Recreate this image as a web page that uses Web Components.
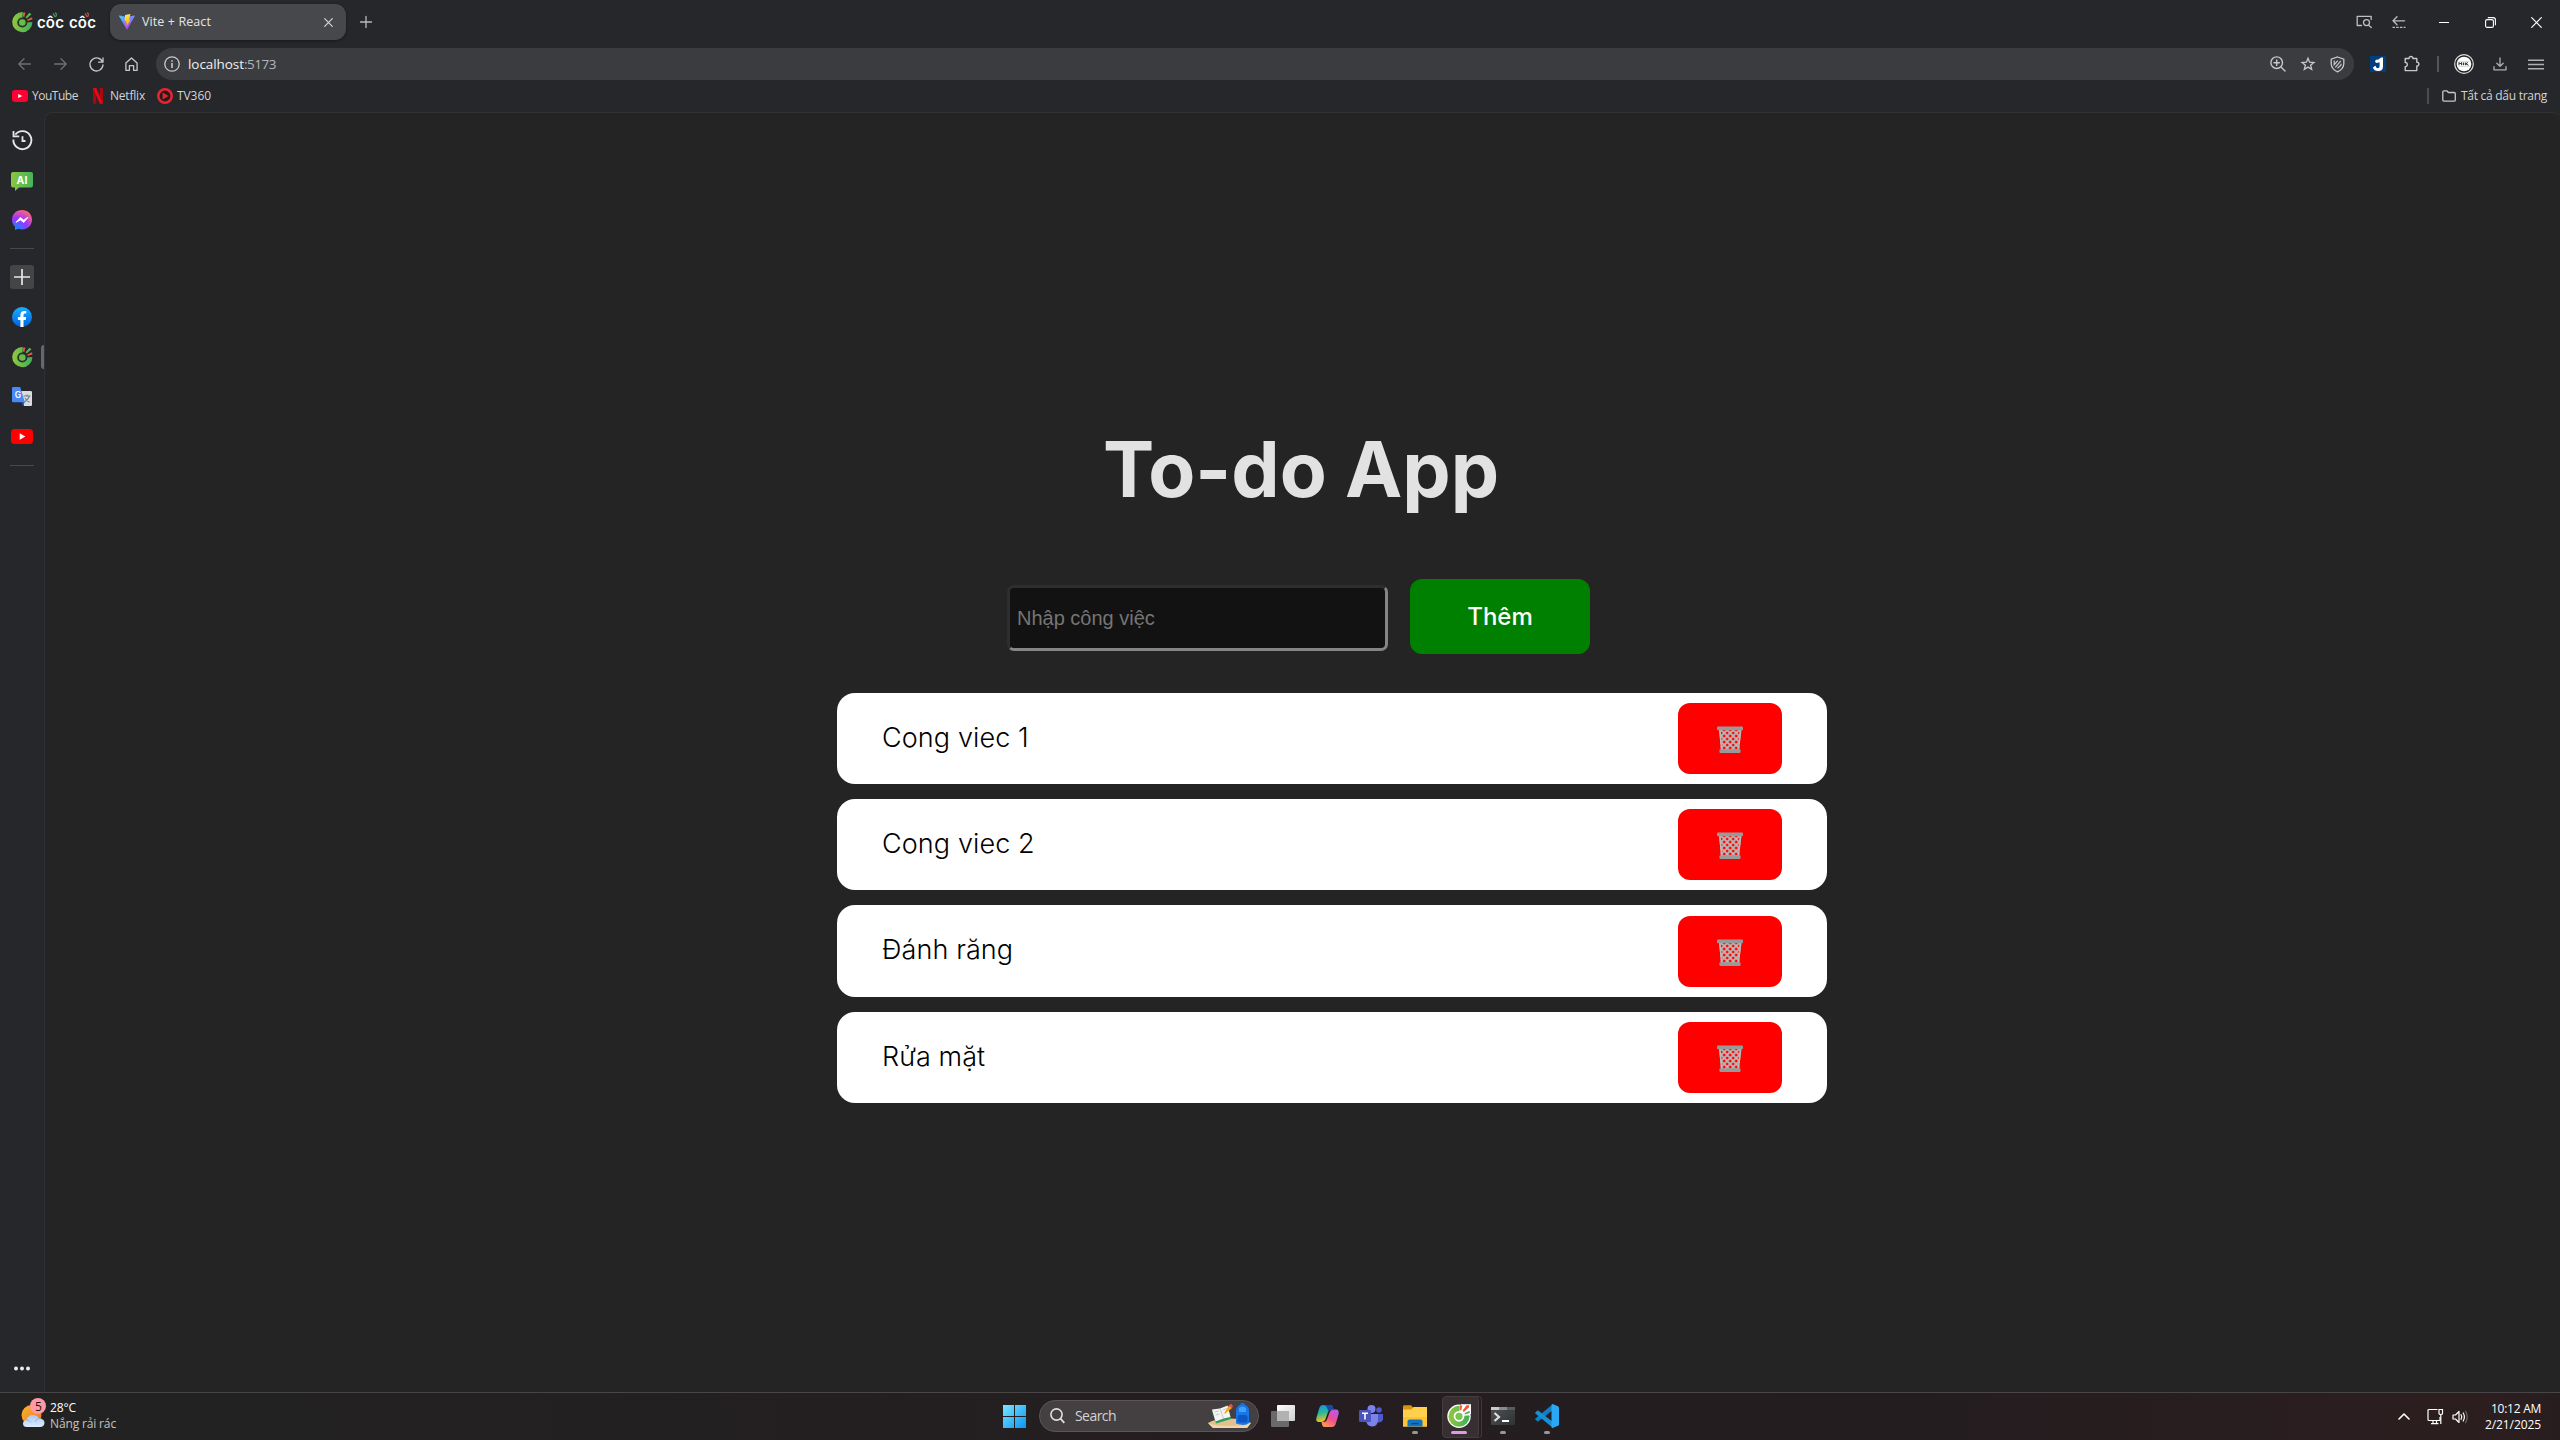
<!DOCTYPE html>
<html lang="vi">
<head>
<meta charset="utf-8">
<title>Vite + React</title>
<style>
html,body{margin:0;height:100%;background:#242424;overflow:hidden}
browser-desktop{height:1440px}
</style>
</head>
<body>
<browser-desktop></browser-desktop>
<script>
const UI = '"Open Sans","Noto Sans",sans-serif';
const coccoc = `<defs><linearGradient id="g" x1="0" x2="1"><stop offset="0" stop-color="#93c83d"/><stop offset="1" stop-color="#3fae5c"/></linearGradient></defs>
<path d="M10.800 0A10.100 10.100 0 1 0 20.400 9.900L14.500 10.500 10.500 6Z" fill="url(#g)"/><circle cx="10.300" cy="10.500" r="4.200" fill="#6cbb4d" stroke="#24352a" stroke-width="1.800"/>
<path d="M10.900 4.600 11.200 .4 13.400 .6 12.300 4.900Z" fill="#ef5a3c"/><path d="M13.500 5.300 17.300 .7 19.500 2.300 14.800 6.500Z" fill="#58b558"/><path d="M15.300 7.600 20 5.300 20.500 7.300 15.700 8.900Z" fill="#ef5a3c"/>`;
const play = (c)=>`<rect width="22" height="15" rx="3.5" fill="${c}"/><path d="M8.7 4.3 14.4 7.5 8.7 10.7Z" fill="#fff"/>`;
const line = (d,c='#c7c8ca',w=1.3)=>`<path d="${d}" fill="none" stroke="${c}" stroke-width="${w}" stroke-linecap="round" stroke-linejoin="round"/>`;
/* name: [width, height, markup] */
const ICONS = {
coccoc:[21,21,coccoc],
coccocRing:[24,24,`<defs><linearGradient id="g" x1="0" x2="1"><stop offset="0" stop-color="#93c83d"/><stop offset="1" stop-color="#3fae5c"/></linearGradient></defs><circle cx="12" cy="12.300" r="11.700" fill="#fff"/><path d="M14 .2H24V10H14Z" fill="#fff"/><circle cx="12" cy="12.300" r="10.500" fill="url(#g)"/><path d="M12.500 7 12.800 1.200H23V11.200L17 11.800Z" fill="#fff"/><circle cx="12" cy="12.300" r="4.500" fill="#7cc450" stroke="#fff" stroke-width="1.800"/><path d="M12.800 6 13.100 1.300 15.200 1.600 14.300 6.300Z" fill="#ef5a3c"/><path d="M15.500 6.800 19.500 1.300 22.300 1.200 21.800 3.600 17 8Z" fill="#ef5a3c"/><path d="M17.600 9.200 22.400 6.700 22.800 9 17.900 10.600Z" fill="#4db15b"/>`],
vite:[16,16,`<defs><linearGradient id="a" x1="0" y1="0" x2=".6" y2="1"><stop stop-color="#41d1ff"/><stop offset="1" stop-color="#bd34fe"/></linearGradient><linearGradient id="b" x1=".4" y1="0" x2=".6" y2="1"><stop stop-color="#ffea83"/><stop offset=".2" stop-color="#ffdd35"/><stop offset="1" stop-color="#ffa800"/></linearGradient></defs><path d="M15.7 2.2 8.4 15.3a.5.5 0 0 1-.8 0L.1 2.2a.4.4 0 0 1 .5-.6l7.3 1.3 7.3-1.3a.4.4 0 0 1 .5.6Z" fill="url(#a)"/><path d="M11.5 0 6.1 1.1 5.7 7.2 7.4 6.8 6.9 9.2 8.1 8.9 7.3 12.7 11.6 5.4 9.9 5.7 11.5 0Z" fill="url(#b)"/>`],
close:[9,9,line('M.7.7 8.3 8.3M8.3.7.7 8.3','#d4d5d7',1.2)],
plus:[12,12,line('M6 .5V11.5M.5 6H11.5','#b9babc',1.3)],
back:[13,12,line('M12.4 6H.8M6 .8.8 6 6 11.2','#6f7073')],
forward:[13,12,line('M.6 6H12.2M7 .8 12.2 6 7 11.2','#6f7073')],
reload:[15,15,line('M13.6 5.2A6.5 6.5 0 1 0 14 7.8M14 .8V5.2H9.6')],
home:[13,14,line('M.9 6 6.5.9 12.1 6V13.3H8.6V8.6H4.4V13.3H.9Z')],
info:[16,16,`<circle cx="8" cy="8" r="7.2" fill="none" stroke="#c7c8ca" stroke-width="1.3"/><path d="M7.2 7h1.6v5H7.2zM7.2 4.2h1.6v1.6H7.2z" fill="#c7c8ca"/>`],
ytb:[16,12,`<rect width="16" height="12" rx="3" fill="#ff0033"/><path d="M6.2 3.9 10.3 6 6.2 8.1Z" fill="#fff"/>`],
netflix:[10,16,`<path d="M0 0H3.3V16L0 15.5ZM6.7 0H10V15.5L6.7 16Z" fill="#a50912"/><path d="M0 0H3.3L10 16 6.7 15.6Z" fill="#e50914"/>`],
tv360:[16,16,`<circle cx="8" cy="8" r="6.7" fill="#27181c" stroke="#e3262f" stroke-width="2.6"/><path d="M5.6 4.6 11.6 8 5.6 11.4Z" fill="#e3262f"/>`],
tabsearch:[16,14,line('M5.5 10.5H1.2V1.3H15.2V4.5M12.9 10.4 15.3 12.6','#bdbec0')+`<circle cx="10.5" cy="7.6" r="3" fill="none" stroke="#bdbec0" stroke-width="1.3"/>`],
dash:[14,12,line('M12.6 4.8H1M5 .8 1 4.8 5 8.8','#bdbec0')+`<path d="M.5 11.3H13.5" stroke="#bdbec0" stroke-width="1.3" stroke-dasharray="2.5 1.2"/>`],
min:[10,10,`<path d="M0 5.5H10" stroke="#fff"/>`],
restore:[11,11,`<rect x=".6" y="2.6" width="7.8" height="7.8" rx="1.5" fill="none" stroke="#fff" stroke-width="1.1"/><path d="M2.8.6H8.2Q10.4.6 10.4 2.8V8.2" fill="none" stroke="#fff" stroke-width="1.1"/>`],
winclose:[11,11,line('M.7.7 10.3 10.3M10.3.7.7 10.3','#fff',1.2)],
zoom:[16,16,`<circle cx="6.7" cy="6.7" r="5.8" fill="none" stroke="#c7c8ca" stroke-width="1.4"/>`+line('M11 11 15 15M6.7 4V9.4M4 6.7H9.4','#c7c8ca',1.4)],
star:[14,14,`<path d="M7 1.2 8.6 5.2 12.9 5.5 9.6 8.2 10.7 12.4 7 10.1 3.3 12.4 4.4 8.2 1.1 5.5 5.4 5.2Z" fill="none" stroke="#c7c8ca" stroke-width="1.3"/>`],
shield:[15,17,`<path d="M7.5 1 13.8 3.1V8Q13.4 13 7.5 15.9 1.6 13 1.2 8V3.1Z" fill="none" stroke="#c7c8ca" stroke-width="1.3"/><path d="M4.2 4.5V8.7L7.8 4.6M10.8 4.8 5.3 11.4M11 7.8V9L7.5 12.2" fill="none" stroke="#c7c8ca" stroke-width="1.2"/>`],
jext:[16,16,`<rect width="16" height="16" fill="#003f7f"/><path d="M8.2 3.6 11.2 1.6H13V10.5Q13 15 8 15 3.6 15 3 11.2L5.6 9.7Q6.2 12.4 8.1 12.2 9.6 12 9.6 10V6.2L8 6.5Z" fill="#fff"/><circle cx="7" cy="5.3" r="1.8" fill="#fff"/>`],
puzzle:[16,16,line('M1.2 2.5H5.1C4.5-.1 9.4-.1 8.8 2.5H12.8V6.3C15.6 5.8 15.6 10.4 12.8 9.9V14.6H1.2V10.6C4 10.9 4 6.1 1.2 6.5Z','#c7c8ca',1.4)],
avatar:[20,20,`<circle cx="10" cy="10" r="9.3" fill="#242424" stroke="#ddd" stroke-width="1.2"/><circle cx="10" cy="10" r="7.300" fill="#fff"/><path d="M5 11.200V8.500L6.300 10 7.600 8.500V11.200M9.400 8.500V11.200M11.300 8.500V11.200M13.800 8.500 11.800 9.800 14.400 11.200" stroke="#222" stroke-width="1" fill="none"/><path d="M4.500 7.300H15.500M4.500 12.400H15.500" stroke="#bbb" stroke-width=".6"/>`],
download:[14,14,line('M7 .8V9.2M3.8 6.2 7 9.3 10.2 6.2M1 9.6V12.8H13V9.6','#aeafb1')],
menu:[16,11,`<path d="M0 1.2H16M0 5.5H16M0 9.8H16" stroke="#aeafb1" stroke-width="1.4"/>`],
folder:[14,12,line('M.8 2Q.8.8 2 .8H4.8L6.4 2.5H12Q13.3 2.5 13.3 3.8V10Q13.3 11.2 12 11.2H2Q.8 11.2.8 10Z')],
history:[21,21,`<path d="M3.3 4.6A9 9 0 1 1 1.4 9.5" fill="none" stroke="#e6e7e9" stroke-width="1.9"/><path d="M1.5 1V6.4H7.2M10.5 6.3V11H13.5" fill="none" stroke="#e6e7e9" stroke-width="1.8"/>`],
ai:[22,19,`<defs><linearGradient id="i"><stop stop-color="#8cc63f"/><stop offset="1" stop-color="#45b35e"/></linearGradient></defs><path d="M2 0H20Q22 0 22 2V13.5Q22 15.5 20 15.5H8L4 19V15.5H2Q0 15.5 0 13.5V2Q0 0 2 0Z" fill="url(#i)"/><text x="11" y="11.7" text-anchor="middle" font-family="Inter" font-weight="700" font-size="10.5" fill="#fff">AI</text>`],
messenger:[20,20,`<defs><radialGradient id="m" cx=".2" cy="1" r="1.1"><stop stop-color="#0090ff"/><stop offset=".55" stop-color="#a033ff"/><stop offset="1" stop-color="#ff6a70"/></radialGradient></defs><path d="M10 0C4.300 0 0 4.200 0 9.700 0 12.500 1.200 15 3 16.700V20L6.300 18.700Q8 19.400 10 19.400C15.700 19.400 20 15.200 20 9.700S15.700 0 10 0Z" fill="url(#m)"/><path d="M4 12.400 8.300 7.400 11.600 10 16 7.300 11.800 12.500 8.400 9.900Z" fill="#fff" stroke="#fff" stroke-width=".8" stroke-linejoin="round"/>`],
add:[24,24,`<rect width="24" height="24" rx="3" fill="#444547"/><path d="M12 4V20M4 12H20" stroke="#e8e8e8" stroke-width="1.7"/>`],
facebook:[20,20,`<defs><linearGradient id="f" x2="0" y2="1"><stop stop-color="#19afff"/><stop offset="1" stop-color="#0062e0"/></linearGradient></defs><circle cx="10" cy="10" r="10" fill="url(#f)"/><path d="M8.400 20V12.900H5.900V10H8.400V7.800C8.400 5.300 9.900 3.900 12.200 3.900L14.200 4.100V6.500H13C11.800 6.500 11.500 7.200 11.500 8V10H14.100L13.700 12.900H11.500V20Q10 20.200 8.400 20Z" fill="#fff"/>`],
translate:[20,20,`<path d="M8 4H18.700Q20 4 20 5.200V18Q20 19 18.700 19H12Z" fill="#dadce0"/><path d="M11.500 9H18.500M15 7.500V9M17.500 9Q16 13 12.500 15M13 11Q15 14 17.500 15.200" stroke="#6e8288" stroke-width="1.200" fill="none"/><path d="M1.200 0H8.200L12.800 15.300H1.200Q0 15.300 0 14V1.200Q0 0 1.200 0Z" fill="#4889f4"/><path d="M9.500 15.300H12.800L10.700 19Z" fill="#1a56c4"/><text x="6" y="11" text-anchor="middle" font-family="Inter" font-weight="600" font-size="8.500" fill="#fff">G</text>`],
yt:[22,15,play('#f00')],
dots:[16,5,`<g fill="#ececec"><circle cx="2" cy="2.500" r="2"/><circle cx="8" cy="2.500" r="2"/><circle cx="14" cy="2.500" r="2"/></g>`],
weather:[26,30,`<defs><linearGradient id="s" x2="1" y2="1"><stop stop-color="#f7b92b"/><stop offset="1" stop-color="#f26f21"/></linearGradient><linearGradient id="c" x2="0" y2="1"><stop stop-color="#a9c8f5"/><stop offset="1" stop-color="#dcebff"/></linearGradient></defs><circle cx="10.500" cy="17" r="10" fill="url(#s)"/><path d="M6 29Q2 29 2 25.500 2 22.500 5.500 22 7 17 12 17 16.500 17 18 20.500 23.500 20.500 23.500 25 23 29 19 29Z" fill="url(#c)"/><path d="M5.500 22Q9 22 10 24.500M18 20.500Q14.500 21 14 24" stroke="#85aeea" fill="none" stroke-width=".8"/><circle cx="17" cy="8" r="8" fill="#ff99a4"/><text x="17.500" y="12.500" text-anchor="middle" font-family="Open Sans" font-size="12" fill="#1d1214">5</text>`],
start:[23,23,`<defs><linearGradient id="v" gradientUnits="userSpaceOnUse" x1="0" y1="0" x2="23" y2="23"><stop stop-color="#79e6ff"/><stop offset="1" stop-color="#0a93f5"/></linearGradient></defs><path d="M0 0H11V11H0ZM12 0H23V11H12ZM0 12H11V23H0ZM12 12H23V23H12Z" fill="url(#v)"/>`],
search:[15,16,`<circle cx="6.500" cy="6.500" r="5.600" fill="none" stroke="#e0dedf" stroke-width="1.600"/><path d="M10.500 10.700 14.300 14.800" stroke="#e0dedf" stroke-width="1.800"/>`],
study:[46,26,`<path d="M1 20Q10 14 34 16L44 20 40 25H6Z" fill="#e4c08e"/><path d="M1 20 6 25H40L44 20Q38 23 22 23 8 23 1 20Z" fill="#f1d6aa"/><path d="M5 8 21 3.500 24 16 9 20.500Z" fill="#2e9b62"/><path d="M5 6.500 13 5.500 20.500 2.500 23.500 14 16.500 15.500 8.500 18.500Z" fill="#f4f5f2"/><path d="M13 5.500 16.500 15.500M7.500 9 11.500 8M8.500 12 12.500 11M16 7 20 5.500" stroke="#b5bcb8" stroke-width=".8"/><path d="M17 10.500 22 2.500 25 5 18.500 10.500Z" fill="#f7a321"/><path d="M22 2.500 24 .8 26 3 25 5Z" fill="#ee5252"/><path d="M29 8Q29 2 35.500 1.500 42 2 42 8V20Q38 23.500 29 20.500Z" fill="#1877e8"/><rect x="30.500" y="12" width="10" height="7.500" rx="2.500" fill="#0d56c4"/><path d="M32 5Q35.500 2 39 5V9H32Z" fill="#42a0fb"/><path d="M33.500 2Q35.500-1 37.500 2" stroke="#1877e8" fill="none" stroke-width="1.300"/>`],
taskview:[24,22,`<defs><linearGradient id="t" x2="1" y2="1"><stop stop-color="#fff"/><stop offset="1" stop-color="#cfcfcf"/></linearGradient></defs><rect y="6" width="18" height="16" rx="1" fill="#6b6a6b"/><rect x="6" width="18" height="16" rx="1" fill="url(#t)"/><path d="M6 6H18V16H6Z" fill="#b3b2b3"/>`],
copilot:[23,22,`<defs><linearGradient id="p" x1="0" y1="0" x2=".2" y2="1"><stop stop-color="#1b8fe6"/><stop offset=".5" stop-color="#29b79c"/><stop offset="1" stop-color="#f4c318"/></linearGradient><linearGradient id="q" x1=".8" y1="0" x2=".2" y2="1"><stop stop-color="#b25bf2"/><stop offset=".5" stop-color="#ec4f8f"/><stop offset="1" stop-color="#ff9d4f"/></linearGradient></defs><path d="M7 0H14.500Q16.500 0 17 2.500L17.500 4.500H15Q13 4.500 12 7L9.500 14Q8.500 17 5 17H3Q-.5 17 .4 13L3 4Q4.200 0 7 0Z" fill="url(#p)"/><path d="M16 22H8.500Q6.500 22 6 19.500L5.500 17H8Q10 17 11 14.500L13.500 7.500Q14.500 4.500 18 4.500H20Q23.500 4.500 22.600 9L20 18Q19 22 16 22Z" fill="url(#q)"/><path d="M7 0H14.500Q16.500 0 17 2.500L17.500 4.500H15Q13 4.500 12.300 6L11 3Q10 0 7 0Z" fill="#1749a8"/>`],
teams:[24,22,`<circle cx="20" cy="5" r="2.800" fill="#5059c9"/><circle cx="12.500" cy="4" r="4" fill="#7b83eb"/><path d="M17 9H24V14.500Q23 18 18.500 17.500Z" fill="#5059c9"/><path d="M7 9H19V15.500Q18.500 21.500 13 21.500 8 21 7 16Z" fill="#7b83eb"/><rect y="5" width="12" height="12" rx="1.200" fill="#4b53bc"/><path d="M3 8.300H9M6 8.300V14.500" stroke="#fff" stroke-width="1.600"/>`],
explorer:[24,22,`<path d="M0 1.500Q0 .2 1.300.2H8L10.500 3V8H0Z" fill="#d9940c"/><path d="M0 4.500H8.500L10.500 2H24V21.500H0Z" fill="#ffd04c"/><path d="M0 12H24V21.500H0Z" fill="#fcc435"/><path d="M4.500 21.500V16.500Q4.500 14.500 6.500 14.500H17.500Q19.500 14.500 19.500 16.500V21.500Z" fill="#1272c4"/><path d="M8.500 18H15.500V19.200H8.500Z" fill="#07437d"/>`],
terminal:[24,18,`<defs><linearGradient id="k" x2="1" y2="1"><stop stop-color="#4d5154"/><stop offset="1" stop-color="#303335"/></linearGradient></defs><rect width="24" height="18" rx="1" fill="url(#k)"/><path d="M0 0H16V3H0Z" fill="#c9c9c9"/><path d="M8 0H16V3H8Z" fill="#8b8b8b"/><path d="M16 0H24V3H16Z" fill="#5c5c5c"/><path d="M3.500 6 8 10 3.500 14" stroke="#ddd" stroke-width="2.200" fill="none"/><path d="M11 14H18" stroke="#fff" stroke-width="2"/>`],
vscode:[24,24,`<path d="M18 0 18 6 3.500 17.200Q2.800 17.700 2.200 17.200L.4 15.600Q-.2 15 .4 14.400Z" fill="#0e7fc7"/><path d="M18 24 18 18 3.500 6.800Q2.800 6.300 2.200 6.800L.4 8.400Q-.2 9 .4 9.600Z" fill="#1590d8"/><path d="M17.500 0 23 2.300Q24 2.800 24 3.800V20.200Q24 21.200 23 21.700L17.500 24Q16.500 24 16.500 22.500V1.500Q16.500 0 17.500 0Z" fill="#2aa8f4"/>`],
chev:[12,7,line('M1 6 6 1 11 6','#fff',1.600)],
net:[17,17,`<path d="M10.500 1.500H2Q1 1.500 1 2.500V11.500Q1 12.500 2 12.500H13V9M4 15.700H11.500M6 12.500V15.700M9.500 12.500V15.700" stroke="#fff" stroke-width="1.200" fill="none"/><path d="M12 1.500H15.500V5.500Q15.500 6.500 13.800 6.500 12 6.500 12 5.500ZM13.800 6.500V16" stroke="#fff" stroke-width="1.200" fill="none"/>`],
sound:[17,14,line('M1 5H3.500L7 1.500V12.500L3.500 9H1ZM9 4.700Q10.500 7 9 9.300M11.200 3Q13.600 7 11.200 11','#fff',1.200)+line('M13.500 1.300Q17 7 13.500 12.700','#706a6a',1.100)],
basket:[26,28,`<defs><pattern id="n" width="6" height="6" patternUnits="userSpaceOnUse" x="1.200" y="1"><path d="M-1-1 7 7M7-1-1 7" stroke="#b9b9b9" stroke-width="1.900"/></pattern><clipPath id="h"><path d="M2 3H24.500L22 25H4Z"/></clipPath></defs><g clip-path="url(#h)"><path d="M0 0H26V27H0Z" fill="url(#n)"/><path d="M2 2 4.200 25M24.300 2 22 25" stroke="#b9b9b9" stroke-width="3"/></g><rect x="0" y=".5" width="26" height="3.700" rx="1" fill="#999"/><rect x="2.500" y="23.200" width="21" height="3.800" rx="1" fill="#999"/>`]
};
class SvgIcon extends HTMLElement{
  connectedCallback(){
    const [w,h,m]=ICONS[this.getAttribute('name')];
    this.attachShadow({mode:'open'}).innerHTML=`<style>:host{display:block;flex:none;width:${w}px;height:${h}px}svg{display:block;overflow:visible}</style><svg width="${w}" height="${h}" viewBox="0 0 ${w} ${h}">${m}</svg>`;
  }
}
customElements.define('svg-icon',SvgIcon);

/* A single line of text whose tracking is adjusted to span the given width. */
class FitText extends HTMLElement{
  connectedCallback(){
    const w=+this.getAttribute('w');
    this.attachShadow({mode:'open'}).innerHTML=`<style>:host{display:block;flex:none;white-space:pre;width:${w}px}span{display:inline-block;white-space:pre}</style><span><slot></slot></span>`;
    const s=this.shadowRoot.querySelector('span');
    const n=this.textContent.length;
    s.style.letterSpacing=((w-s.getBoundingClientRect().width)/n)+'px';
  }
}
customElements.define('fit-text',FitText);

function define(tag,css,html){
  const t=document.createElement('template');
  t.innerHTML=`<style>*{box-sizing:border-box}${css}</style>${html}`;
  customElements.define(tag,class extends HTMLElement{
    constructor(){super();this.attachShadow({mode:'open'})}
    connectedCallback(){ if(!this.shadowRoot.childNodes.length) this.shadowRoot.appendChild(document.importNode(t.content,true)); }
  });
}
const i=(name,ml=0,mt=0)=>`<svg-icon name="${name}" style="margin-left:${ml}px;margin-top:${mt}px"></svg-icon>`;

define('brand-logo',`:host{display:flex;align-items:flex-start;width:86px;height:26px;margin-top:9px}
.word{position:relative;font:600 15px/28px Inter,sans-serif;color:#fff}.a{margin-left:4px}.b{margin-left:5px}
svg{position:absolute;left:15px;top:3px}`,
`${i('coccoc',0,3)}<div class="word a"><fit-text w="27">côc</fit-text><svg width="7" height="6"><path d="M1 1.500 3 4.500 5 3.500M3 .8 5 2.500" stroke="#3fae5c" fill="none" stroke-width="1.200"/></svg></div>
<div class="word b"><fit-text w="27">côc</fit-text><svg width="7" height="6"><path d="M1 1.500 3 4.500 5 3.500M3 .8 5 2.500" stroke="#e4573d" fill="none" stroke-width="1.200"/></svg></div>`);

define('browser-tab',`:host{display:flex;align-items:center;width:236px;height:36px;margin:4px 0 0 12px;padding:0 13px 0 9px;border-radius:11px;background:#47484c;color:#e4e5e7;font:12.500px/20px ${UI};box-shadow:0 1px 3px #0006}
fit-text{margin-left:7px}.x{margin-left:auto}`,
`${i('vite')}<fit-text w="69">Vite + React</fit-text><div class="x">${i('close')}</div>`);

define('tab-strip',`:host{display:flex;height:44px;padding-left:12px;align-items:flex-start}
.r{display:flex;align-items:center;height:44px;margin-left:auto;padding-right:18px}.p{margin:16px 0 0 14px}`,
`<brand-logo></brand-logo><browser-tab></browser-tab><div class="p">${i('plus')}</div>
<div class="r">${i('tabsearch')}${i('dash',20)}${i('min',33)}${i('restore',36)}${i('winclose',35)}</div>`);

define('address-bar',`:host{display:flex;align-items:center;flex:1;height:32px;margin-left:18px;border-radius:16px;background:#3b3c40;padding:0 9px 0 8px;font:13.500px/20px ${UI}}
fit-text{color:#eff0f1;margin-left:8px}.port{color:#b4b5b8;margin-left:0}.r{display:flex;align-items:center;margin-left:auto}`,
`${i('info')}<fit-text w="56">localhost</fit-text><fit-text class="port" w="32">:5173</fit-text><div class="r">${i('zoom')}${i('star',15)}${i('shield',15)}</div>`);

define('tool-bar',`:host{display:flex;align-items:center;height:40px;padding:0 16px 0 18px}i{width:2px;height:16px;background:#55565a;margin-left:17px}`,
`${i('back')}${i('forward',23)}${i('reload',22)}${i('home',21)}<address-bar></address-bar>${i('jext',16)}${i('puzzle',18)}<i></i>${i('avatar',15)}${i('download',19)}${i('menu',21)}`);

define('bookmark-bar',`:host{display:flex;align-items:center;height:28px;padding:0 13px 4px 12px;color:#d3d4d6;font:12px/18px ${UI}}
.m{margin-left:auto;width:2px;height:16px;background:#4b4c50}fit-text{margin-left:4px}`,
`${i('ytb')}<fit-text w="46">YouTube</fit-text>${i('netflix',15)}<fit-text w="35" style="margin-left:7px">Netflix</fit-text>${i('tv360',12)}<fit-text w="34">TV360</fit-text>
<div class="m"></div>${i('folder',13)}<fit-text w="86" style="margin-left:5px">Tất cả dấu trang</fit-text>`);

define('side-bar',`:host{display:flex;flex-direction:column;align-items:center;width:44px;padding:18px 0 21px}
hr{width:24px;height:1px;border:0;margin:0;background:#47484a;flex:none}
.cur{display:flex;align-items:center;width:44px;height:24px;margin-top:18px;padding-left:12px}
.cur b{margin-left:8px;width:3px;height:24px;border-radius:3px 0 0 3px;background:#666769}.end{margin-top:auto}`,
`${i('history')}${i('ai',0,21)}${i('messenger',0,19)}<hr style="margin-top:18px">${i('add',0,16)}${i('facebook',0,18)}<div class="cur">${i('coccoc')}<b></b></div>${i('translate',0,18)}${i('yt',0,22)}<hr style="margin-top:21px"><div class="end">${i('dots')}</div>`);

define('add-form',`:host{display:flex;align-items:center;height:75px}
input{width:381px;height:66px;margin:3px 0 0;padding:0 7px;border:3px solid;border-color:#2e2e2e #858585 #858585 #2e2e2e;border-radius:7px;background:#121212;font:400 20px "Liberation Sans",Arial,sans-serif;outline:0}
input::placeholder{color:#757575;opacity:1}
button{width:180px;height:75px;margin-left:22px;border:0;border-radius:12px;background:green;color:#fff;font:500 24px Inter,sans-serif;padding:0}`,
`<input placeholder="Nhập công việc"><button>Thêm</button>`);

define('todo-item',`:host{display:flex;align-items:center;justify-content:space-between;height:91.400px;padding:0 45px;border-radius:18px;background:#fff;color:#000;font:300 27px/36px Inter,sans-serif;letter-spacing:.1px}
.t{margin-top:-1.400px}
button{display:flex;align-items:center;justify-content:center;width:104px;height:71px;border:0;border-radius:12px;background:red;padding:3px 0 0}`,
`<div class="t"><slot></slot></div><button>${i('basket')}</button>`);

define('todo-page',`:host{display:block;flex:1;border-left:1px solid #303134;border-top:1px solid #303134;border-top-left-radius:8px;border-top-right-radius:8px;background:#242424}
h1{margin:315px 0 0 1058px;font:700 76.800px/84px Inter,sans-serif;color:rgba(255,255,255,.87);white-space:nowrap}
add-form{margin-left:962px;margin-top:67px}
.list{display:flex;flex-direction:column;gap:15px;width:990px;margin:38.700px 0 0 792px}`,
`<h1>To-do App</h1><add-form></add-form><div class="list"><todo-item>Cong viec 1</todo-item><todo-item>Cong viec 2</todo-item><todo-item>Đánh răng</todo-item><todo-item>Rửa mặt</todo-item></div>`);

define('task-search',`:host{display:flex;align-items:center;width:220px;height:32px;margin-left:13px;padding:0 5px 0 10px;border:1px solid #5b5556;border-radius:16px;background:#443f40;color:#d5d2d3;font:14px/20px ${UI}}fit-text{margin-left:10px}`,
`${i('search')}<fit-text w="41">Search</fit-text><div style="margin-left:auto">${i('study')}</div>`);

define('task-app',`:host{display:flex;flex-direction:column;align-items:center;justify-content:center;position:relative;width:44px;height:46px;padding-bottom:1px}
i{position:absolute;bottom:5px;width:6px;height:3px;border-radius:2px;background:#9a9697;display:none}
:host([run]) i{display:block}:host([active]) i{width:16px;background:#dc9be4}
:host([active])::before{content:"";position:absolute;left:5px;top:3px;width:35px;height:40px;border:1px solid #443e40;border-radius:4px;background:#372f31;z-index:-1}
:host([active])::after{content:"";position:absolute;left:38px;top:3px;width:6px;height:40px;border:1px solid #40393b;border-left:0;border-radius:0 4px 4px 0;z-index:-1}`,`<slot></slot><i></i>`);

define('task-bar',`:host{display:grid;grid-template-columns:1003px 1fr auto;height:48px;border-top:1px solid #4a4647;background:linear-gradient(90deg,#222 0,#231f21 35%,#251d1f 50%,#241d1f 75%,#2c1e1f 97%,#271d1f);color:#fff;font:12px/16px ${UI};z-index:0;position:relative}
.w{display:flex;padding:5px 0 0 21px}.w div{margin:2px 0 0 3px}.s{color:#c4c2c2}
.c{display:flex;align-items:center;padding-bottom:1px}.apps{display:flex;margin-left:2px}
.t{display:flex;align-items:center;padding-right:19px}.clock{display:flex;flex-direction:column;align-items:flex-end;margin-left:15px;width:57px}`,
`<div class="w">${i('weather')}<div><fit-text w="26">28°C</fit-text><fit-text class="s" w="66">Nắng rải rác</fit-text></div></div>
<div class="c">${i('start',0,1)}<task-search></task-search><div class="apps"><task-app>${i('taskview')}</task-app><task-app>${i('copilot')}</task-app><task-app>${i('teams')}</task-app><task-app run>${i('explorer')}</task-app><task-app run active>${i('coccocRing')}</task-app><task-app run>${i('terminal')}</task-app><task-app run>${i('vscode')}</task-app></div></div>
<div class="t">${i('chev')}${i('net',17)}${i('sound',8)}<div class="clock"><fit-text w="50">10:12 AM</fit-text><fit-text w="56">2/21/2025</fit-text></div></div>`);

define('browser-desktop',`:host{display:flex;flex-direction:column;background:#25272a}
.main{display:flex;flex:1;min-height:0}`,
`<tab-strip></tab-strip><tool-bar></tool-bar><bookmark-bar></bookmark-bar><div class="main"><side-bar></side-bar><todo-page></todo-page></div><task-bar></task-bar>`);
</script>
</body>
</html>
